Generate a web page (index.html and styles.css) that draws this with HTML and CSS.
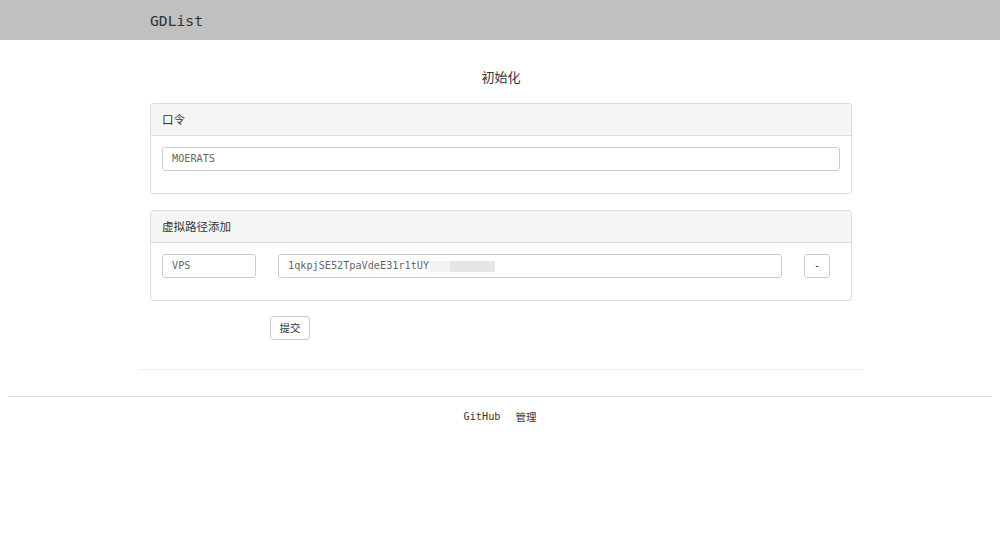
FILE: index.html
```html
<!DOCTYPE html>
<html lang="zh">
<head>
<meta charset="utf-8">
<title>GDList</title>
<link rel="stylesheet" href="styles.css">
</head>
<body>
<header class="topbar">
  <div class="wrap"><span class="brand">GDList</span></div>
</header>
<main class="wrap main">
  <h3 class="title">初始化</h3>
  <section class="panel">
    <div class="panel-heading">口令</div>
    <div class="panel-body">
      <div class="input full">MOERATS</div>
    </div>
  </section>
  <section class="panel panel2">
    <div class="panel-heading">虚拟路径添加</div>
    <div class="panel-body">
      <div class="row">
        <div class="input name">VPS</div>
        <div class="input path">1qkpjSE52TpaVdeE31r1tUY<span class="redact"></span></div>
        <div class="btn minus">-</div>
      </div>
    </div>
  </section>
  <div class="submit-row"><div class="btn submit">提交</div></div>
  <hr class="sep">
</main>
<footer class="footer">
  <div class="links"><span>GitHub</span><span>管理</span></div>
</footer>
</body>
</html>
```
FILE: styles.css
```css
html, body { margin: 0; padding: 0; background: #fff; }
body {
  font-family: "DejaVu Sans Mono", "Noto Sans CJK SC", monospace;
  color: #333;
  font-size: 12px;
}
.wrap { width: 702px; margin: 0 auto; padding: 0 12px; }
.topbar { background: #c0c0c0; height: 40px; }
.topbar .wrap { height: 40px; display: flex; align-items: center; }
.brand { font-size: 14.7px; color: #333; padding-left: 1px; }
.main { padding: 0 11px 0 13px; }
.title {
  margin: 0; padding-top: 27px; height: 20px; line-height: 20px;
  font-size: 13px; font-weight: normal; text-align: center; color: #333;
  font-family: "Noto Sans CJK SC", sans-serif;
}
.panel {
  margin-top: 16px; border: 1px solid #ddd; border-radius: 3px; background: #fff;
}
.panel-heading {
  background: #f5f5f5; border-bottom: 1px solid #ddd; height: 31px; line-height: 31px;
  padding: 0 11px; font-size: 11.5px; color: #333;
  font-family: "Noto Sans CJK SC", sans-serif;
}
.panel-body { padding: 11px 11px 22px; }
.input {
  box-sizing: border-box; height: 24px; line-height: 22px; border: 1px solid #ccc; border-radius: 3px;
  padding: 0 9px; color: #666; font-size: 10.2px; background: #fff;
}
.row { display: flex; }
.name { width: 94px; }
.path { width: 504px; margin-left: 22px; display: flex; align-items: center; }
.redact { display: inline-block; width: 65px; height: 11px; margin-left: 1px;
  background: linear-gradient(90deg, #f2f2f2 0 20px, #e6e6e6 20px); }
.btn {
  box-sizing: border-box; height: 24px; line-height: 22px; border: 1px solid #ccc; border-radius: 3px;
  text-align: center; color: #333; background: #fff;
}
.minus { width: 26px; margin-left: 22px; font-size: 10px; }
.submit-row { padding: 15px 0 0 120px; }
.submit { width: 40px; font-size: 10.5px; font-family: "Noto Sans CJK SC", sans-serif; }
.sep { margin: 29px -12px 0; border: 0; border-top: 1px solid #eee; height: 0; }
.footer { margin: 26px 8px 0; border-top: 1px solid #ddd; }
.links { display: flex; justify-content: center; gap: 15px; padding-top: 13px; font-size: 10.2px; color: #333; line-height: 14px; }
.links span:last-child { font-size: 10.5px; font-family: "Noto Sans CJK SC", sans-serif; }
```
